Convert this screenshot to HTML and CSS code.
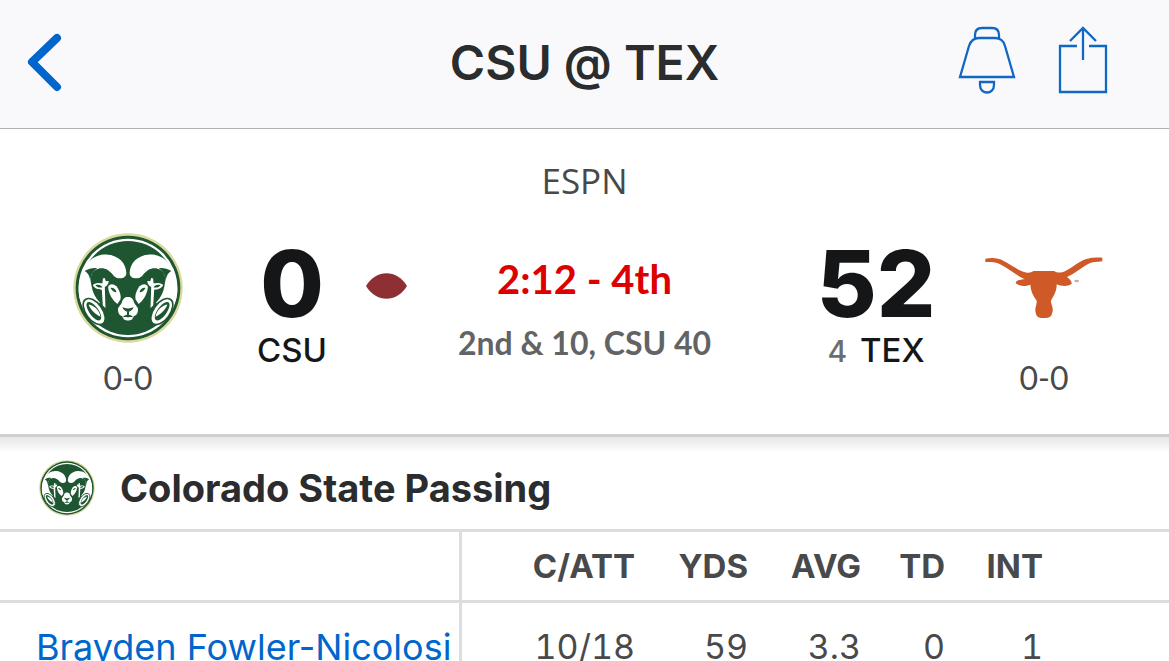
FILE: index.html
```html
<!DOCTYPE html>
<html lang="en">
<head>
<meta charset="utf-8">
<meta name="viewport" content="width=device-width, initial-scale=1">
<title>CSU @ TEX</title>
<link rel="stylesheet" href="styles.css">
</head>
<body>
<svg class="symbols" aria-hidden="true">
  <symbol id="ram" viewBox="41 24 332 332">
    <circle cx="207" cy="190" r="165" fill="#d9d99c"/>
    <circle cx="207" cy="190" r="158" fill="#1e5631"/>
    <circle cx="207" cy="190" r="149" fill="#fff"/>
    <circle cx="207" cy="190" r="142" fill="#1e5631"/>
    <g id="ram-half">
      <path fill="#fff" d="M74 134C86 104 112 88 142 89C180 91 202 117 202 146C200 164 174 165 163 152C148 131 127 124 108 136C94 146 92 163 97 184C100 202 108 220 122 234L112 250L74 250C62 232 58 214 58 197C58 172 63 149 74 134Z"/>
      <path fill="#1e5631" d="M76 139C88 131 100 129 114 130C100 141 93 153 94 174C92 160 90 146 76 139Z"/>
      <ellipse cx="105" cy="261" rx="25" ry="45" transform="rotate(-36 105 261)" fill="#fff" stroke="#1e5631" stroke-width="5"/>
      <ellipse cx="104" cy="260" rx="14" ry="33" transform="rotate(-36 104 260)" fill="#1e5631"/>
      <path fill="#fff" d="M88 240C106 243 121 258 124 277C108 269 95 258 88 240Z"/>
      <path fill="#fff" d="M101 181C109 173 120 174 130 176L131 161L137 160L140 170L149 169C148 180 142 185 137 187L139 250L131 243L128 195C116 195 105 191 101 181Z"/>
      <path fill="#1e5631" d="M109 181C118 178 127 181 130 188C121 190 113 188 109 181Z"/>
      <path fill="#fff" d="M147 187C150 177 163 176 172 185C181 197 187 211 184 225L175 238C161 228 149 209 147 187Z"/>
      <path fill="#1e5631" d="M154 190C162 188 171 194 172 203C165 203 159 198 154 190Z"/>
      <path fill="#fff" d="M207 217C196 216 191 224 188 235L177 251C176 264 180 273 190 275C192 285 199 288 207 288Z"/>
      <path fill="#1e5631" d="M207 262C200 261 194 257 190 248C196 249 201 251 207 252ZM204 260H207V279C201 277 196 278 191 279C194 273 200 272 204 271Z"/>
    </g>
    <use href="#ram-half" transform="translate(414 0) scale(-1 1)"/>
  </symbol>
</svg>

<header class="topbar">
  <button class="icon-button" type="button" aria-label="Back">
    <svg width="38" height="60" viewBox="0 0 38 60"><path d="M33 5 8 29 33 54" fill="none" stroke="#06c" stroke-width="8" stroke-linecap="round" stroke-linejoin="round"/></svg>
  </button>
  <h1 class="topbar-title">CSU @ TEX</h1>
  <div class="topbar-actions">
    <button class="icon-button" type="button" aria-label="Alerts">
      <svg width="58" height="68" viewBox="0 0 58 68" fill="none" stroke="#1068c4" stroke-width="2.3"><path d="M17 12V9C17 4 20 2 24 2H34C39 2 41 5 41 9V12M2 51 11 20C13 14 16 12 21 12H37C42 12 46 15 47 20L56 51ZM22 56H36V59C36 69 22 69 22 59Z"/></svg>
    </button>
    <button class="icon-button" type="button" aria-label="Share">
      <svg width="50" height="68" viewBox="0 0 50 68" fill="none" stroke="#1068c4" stroke-width="2.3"><path d="M19 20H2V66H48V20H31M25 34V3M12 15 25 2 38 15"/></svg>
    </button>
  </div>
</header>

<main>
  <section class="scoreboard" aria-label="Score">
    <p class="network">ESPN</p>
    <div class="matchup">
      <div class="team">
        <svg class="team-logo" role="img" aria-label="Colorado State"><use href="#ram"/></svg>
        <span class="record">0-0</span>
      </div>
      <div class="points">
        <strong class="score">0</strong>
        <span class="abbr">CSU</span>
      </div>
      <svg class="possession" viewBox="0 0 41 26" role="img" aria-label="Possession"><path fill="#8e3033" d="M0 13C10-4 31-4 41 13C31 30 10 30 0 13Z"/></svg>
      <div class="status">
        <span class="clock">2:12 - 4th</span>
        <span class="down">2nd &amp; 10, CSU 40</span>
      </div>
      <div class="points points-away">
        <strong class="score">52</strong>
        <span class="abbr"><small class="rank">4</small> TEX</span>
      </div>
      <div class="team">
        <svg class="team-logo team-logo-wide" viewBox="32 -20 354 330" role="img" aria-label="Texas">
          <path fill="#cf5a28" d="M33 57C52 54 72 54 88 64C113 76 132 94 158 99Q170 100 178 94H239C249 100 261 100 272 95C297 83 317 60 346 56C360 53 374 54 384 54V65C368 68 354 66 343 72C320 84 303 101 278 112C286 119 293 125 292 132C281 141 261 140 247 134C248 154 237 169 230 183C229 193 237 202 235 214C232 233 225 235 208 235C190 235 185 229 183 213C182 204 188 195 187 183C175 167 169 153 168 135C153 141 135 141 124 131C124 121 139 120 151 119C125 107 105 87 80 75C65 66 50 67 33 67Z"/>
          <ellipse cx="307" cy="124" rx="7" ry="4" fill="#b9b0aa"/>
        </svg>
        <span class="record">0-0</span>
      </div>
    </div>
  </section>

  <section class="stats" aria-labelledby="stats-title">
    <div class="stats-heading">
      <svg class="stats-logo" aria-hidden="true"><use href="#ram"/></svg>
      <h2 id="stats-title" class="stats-title">Colorado State Passing</h2>
    </div>
    <table class="stats-table">
      <colgroup><col class="col-name"><col class="col-catt"><col class="col-yds"><col class="col-avg"><col class="col-td"><col></colgroup>
      <thead>
        <tr><td></td><th scope="col">C/ATT</th><th scope="col">YDS</th><th scope="col">AVG</th><th scope="col">TD</th><th scope="col">INT</th></tr>
      </thead>
      <tbody>
        <tr><th scope="row"><a class="player" href="#player">Brayden Fowler-Nicolosi</a></th><td>10/18</td><td>59</td><td>3.3</td><td>0</td><td>1</td></tr>
      </tbody>
    </table>
  </section>
</main>
</body>
</html>
```
FILE: styles.css
```css
* { box-sizing: border-box; }

body {
  margin: 0;
  background: #fff;
  color: #2b2c2d;
  font-family: Inter, "Liberation Sans", sans-serif;
}

h1, h2, p { margin: 0; }
svg { display: block; }
.symbols { position: absolute; width: 0; height: 0; }

.topbar {
  display: grid;
  grid-template-columns: 1fr auto 1fr;
  align-items: center;
  height: 129px;
  padding: 0 61px 2px 24px;
  border-bottom: 1px solid #b2b2b2;
  background: #f9f9fb;
}
.topbar-title {
  margin-left: 37px;
  font-size: 48px;
  font-weight: 600;
  font-variant-ligatures: no-contextual;
  line-height: 60px;
}
.topbar-actions { display: flex; justify-content: flex-end; gap: 42px; margin-top: -6px; }
.icon-button {
  justify-self: start;
  padding: 0;
  border: 0;
  background: none;
  cursor: pointer;
}

.scoreboard {
  padding-top: 30px;
  padding-bottom: 36px;
  border-bottom: 3px solid #cfcfcf;
  text-align: center;
}
.network {
  color: #48494a;
  font-family: "Open Sans", sans-serif;
  font-size: 35px;
  line-height: 44px;
}
.matchup {
  display: grid;
  grid-template-columns: 180px 148px 41px 1fr 36px 156px 180px;
  align-items: start;
  padding: 30px 35px 0 38px;
}
.team, .points, .status { display: flex; flex-direction: column; align-items: center; }
.team-logo { width: 110px; height: 110px; }
.team-logo-wide { width: 118px; }
.record {
  margin-top: 15px;
  color: #48494a;
  font-family: Lato, sans-serif;
  font-size: 32px;
  line-height: 40px;
}
.points, .clock, .down { color: #151618; }
.points-away { grid-column: 6; }
.score {
  font-size: 92px;
  font-weight: 800;
  line-height: 102px;
}
.abbr {
  font-size: 33px;
  font-weight: 500;
  line-height: 30px;
}
.rank {
  margin-right: 4px;
  color: #6c6d6f;
  font-size: 30px;
}
.possession { width: 41px; height: 26px; margin-top: 40px; }
.status { gap: 20px; padding-top: 22px; }
.clock {
  color: #d00;
  font-family: Lato, sans-serif;
  font-size: 40px;
  font-weight: 700;
  line-height: 48px;
}
.down {
  color: #626365;
  font-family: Lato, sans-serif;
  font-size: 32px;
  font-weight: 700;
  line-height: 40px;
}

.stats-heading {
  display: flex;
  align-items: center;
  gap: 25px;
  height: 92px;
  padding: 10px 39px 0;
  background: linear-gradient(#e6e6e6, #fff 16px);
}
.stats-logo { width: 56px; height: 56px; }
.stats-title { font-size: 38px; font-weight: 700; line-height: 44px; }

.stats-table {
  width: 100%;
  border-spacing: 0;
  table-layout: fixed;
  color: #48494a;
  font-size: 33px;
  line-height: 44px;
}
.col-name { width: 462px; }
.col-catt { width: 173px; }
.col-yds, .col-avg { width: 113px; }
.col-td { width: 84px; }
.stats-table th, .stats-table td {
  height: 71px;
  padding: 0;
  border-top: 3px solid #dcddde;
  text-align: right;
}
.stats-table th { font-weight: 700; }
.stats-table tr > :first-child { border-right: 3px solid #dcddde; }
.stats-table tr > :last-child { padding-right: 126px; }
.stats-table tbody th, .stats-table tbody td {
  height: 90px;
  font-weight: 400;
}
.stats-table tbody td { font-size: 34px; font-variant-numeric: tabular-nums; }
.stats-table tbody th {
  padding-left: 36px;
  font-size: 36px;
  text-align: left;
  white-space: nowrap;
}
.player { color: #06c; text-decoration: none; }
```
